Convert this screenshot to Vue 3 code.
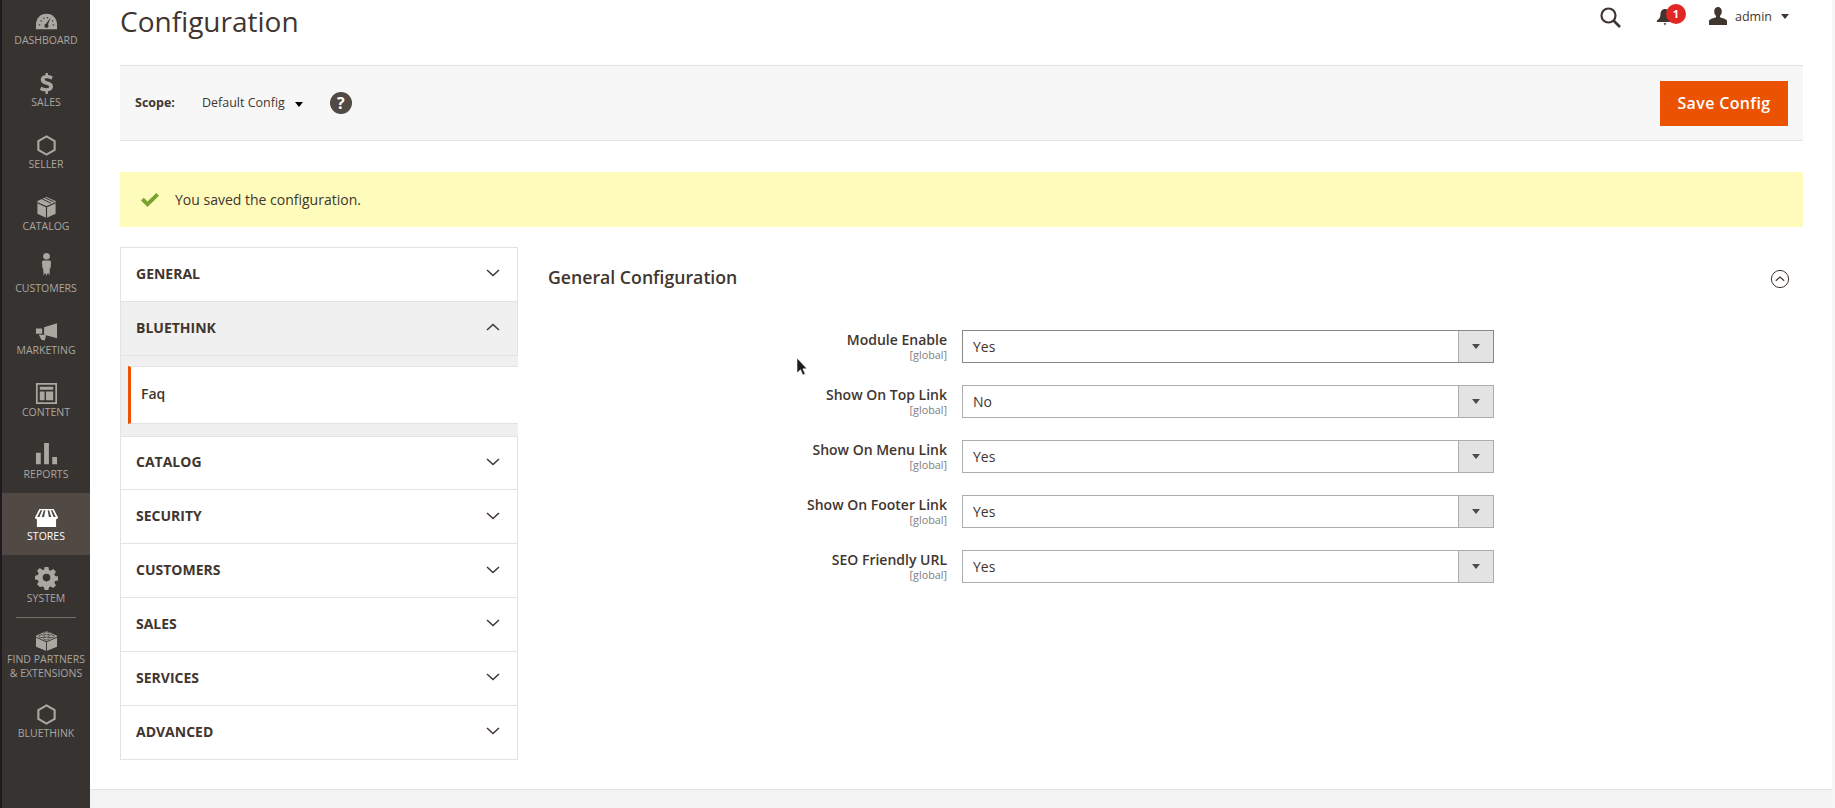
<template>
  <div class="page">
    <aside class="menu">
      <a v-for="item in menu" :key="item.label" class="menu-item" :class="{ active: item.active, partners: item.partners }">
        <svg class="menu-icon" viewBox="0 0 24 24" v-html="item.icon"></svg>
        <span class="menu-label" v-html="item.label"></span>
      </a>
    </aside>

    <div class="main">
      <div class="content">
        <header class="top">
          <h1>Configuration</h1>
          <div class="top-actions">
            <svg class="search" viewBox="0 0 21 21"><circle cx="8.500" cy="8.500" r="7" fill="none" stroke="#41362f" stroke-width="2.200" /><path d="M13.500 13.500L20 20" stroke="#41362f" stroke-width="2.600" /></svg>
            <div class="bell">
              <svg viewBox="0 0 20 20"><path d="M10 1c-3 0-5 2.400-5 5.500 0 3.500-1 5.500-4 7.500v1.500h18V14c-3-2-4-4-4-7.500C15 3.400 13 1 10 1zM8.500 17h3l-1.500 2.500z" fill="#41362f" /></svg>
              <span class="badge">1</span>
            </div>
            <div class="user">
              <svg viewBox="0 0 20 18"><path d="M10 0C7.800 0 6.200 1.800 6.200 4.200c0 2 .7 3.600 1.800 4.600v1.400c-2.500.8-6 1.700-7 3.300V18h18v-4.500c-1-1.600-4.500-2.500-7-3.300V8.800c1.100-1 1.800-2.600 1.800-4.600C13.800 1.800 12.200 0 10 0z" fill="#41362f" /></svg>
              <span>admin</span>
              <i class="caret"></i>
            </div>
          </div>
        </header>

        <div class="actions">
          <div class="scope">
            <b>Scope:</b>
            <span class="scope-value">Default Config</span>
            <i class="caret black"></i>
            <span class="help">?</span>
          </div>
          <button class="save">Save Config</button>
        </div>

        <div class="message">
          <svg viewBox="0 0 20 16"><path d="M1 8.500l2.800-2.700 3.700 3.600L16.300 1 19 3.700 7.500 15z" fill="#79a22e" /></svg>
          <span>You saved the configuration.</span>
        </div>

        <div class="columns">
          <nav class="tabs">
            <template v-for="tab in tabs" :key="tab.name">
              <div class="tab" :class="{ open: tab.open }">
                <span>{{ tab.name }}</span>
                <svg viewBox="0 0 14 8"><path :d="tab.open ? 'M1 7l6-5.500L13 7' : 'M1 1l6 5.500L13 1'" fill="none" stroke="#41362f" stroke-width="1.500" /></svg>
              </div>
              <div v-if="tab.open" class="sub">
                <div class="sub-item">Faq</div>
              </div>
            </template>
          </nav>

          <section class="form">
            <div class="section-head">
              <h2>General Configuration</h2>
              <svg viewBox="0 0 20 20"><circle cx="10" cy="10" r="8.600" fill="none" stroke="#41362f" stroke-width="1" /><path d="M5.800 11.800L10 8l4.200 3.800" fill="none" stroke="#41362f" stroke-width="1.200" /></svg>
            </div>
            <div class="rows">
              <div v-for="(row, i) in rows" :key="row.label" class="row">
                <div class="row-label">
                  <label>{{ row.label }}</label>
                  <small>[global]</small>
                </div>
                <div class="select" :class="{ focused: i === 0 }">
                  <span>{{ row.value }}</span>
                  <div class="addon"><i></i></div>
                </div>
              </div>
            </div>
          </section>
        </div>
      </div>
      <div class="footer"></div>
      <div class="scrollbar"></div>
    </div>

    <svg class="cursor" viewBox="0 0 12 20"><path d="M1 1v15l3.500-3.300 2.300 5.300 2.400-1-2.300-5.200H11z" fill="#1c1c1c" stroke="#fff" stroke-width=".6" /></svg>
  </div>
</template>

<script setup>
const hexagon = '<path d="M12 2.500l8.500 4.800v9.400L12 21.500l-8.500-4.800V7.300z" fill="none" stroke="currentColor" stroke-width="2.200"/>'
const dark = '#373330'

const menu = [
  { label: 'Dashboard', icon: `<path d="M12 4C5.500 4 1 9 1 15.500V20h22v-4.500C23 9 18.500 4 12 4z"/><path d="M4 15.500h1.500M5.800 11l1.200.8M9 7.800l.6 1.300M13 7.200v1.500M19 11l-1.200.8M20 15.500h-1.500" stroke="${dark}" stroke-width="1.200"/><path d="M16.500 7.500l-3.400 8.800-2.400-1z" fill="${dark}"/><circle cx="12" cy="16.500" r="2.200" fill="${dark}"/>` },
  { label: 'Sales', icon: '<path d="M11 1h2.500v2.200c2 .2 3.800.8 5 1.600l-1.300 3.300c-1.500-.9-3.300-1.500-5-1.500-1.500 0-2.200.5-2.200 1.300 0 .9 1 1.300 3.300 2 3.300.9 5.500 2.200 5.500 5.300 0 2.700-1.900 4.600-5.300 5V23H11v-2.700c-2.300-.2-4.500-.9-5.800-1.900l1.400-3.300c1.500 1 3.600 1.800 5.600 1.800 1.600 0 2.500-.5 2.500-1.500 0-.9-.9-1.400-3.100-2-3.400-1-5.600-2.200-5.600-5.200 0-2.700 1.900-4.500 5.100-5z"/>' },
  { label: 'Seller', icon: hexagon },
  { label: 'Catalog', icon: `<path d="M12 1l9.500 4.200v13.300L12 23l-9.500-4.500V5.200z"/><path d="M2.500 7L12 11.300 21.500 7M12 11.300V23" fill="none" stroke="${dark}" stroke-width="1.200"/><path d="M7.500 3.200l9 4.200M10.500 2l9 4" stroke="${dark}" stroke-width="1"/>` },
  { label: 'Customers', icon: '<g transform="translate(-.6 -6) scale(1.05)"><circle cx="12" cy="4" r="3.300"/><path d="M8.500 8.200h7l1 1.300-.4 6-.8.800-.4 7-1.400-3-1.500 3-1.500-3-1.400 3-.4-7-.8-.8-.4-6z"/></g>' },
  { label: 'Marketing', icon: '<path d="M23 3.500v15.500L9.500 15.500v-8zM1 8.800h6.500v5.500H1zM4 15.300h4.500l3 1-1.300 5.200-3.500-1z"/>' },
  { label: 'Content', icon: '<path fill-rule="evenodd" d="M1 1h22v22H1zm1.800 1.800v18.400h18.400V2.800z"/><path d="M5 5h14v3H5zM5 10h5v9H5zM11.500 10H19v9h-7.500z"/>' },
  { label: 'Reports', icon: '<path transform="translate(0 -2)" d="M1 11h5v12H1zM9.500 1h5v22h-5zM18 15.500h5V23h-5z"/>' },
  { label: 'Stores', active: true, icon: '<path fill-rule="evenodd" d="M4.500 3h15L24 12c0 1.200-1 1.800-2 1.800V22H2v-8.200c-1 0-2-.6-2-1.800zM5.800 4.500L2.300 11.500h2.300L7.500 4.500zM9.300 4.500L7 11.500h2.500l1.300-7zM13.200 4.500l1.300 7H17l-2.300-7zM16.500 4.500l2.900 7h2.300l-3.500-7z"/>' },
  { label: 'System', icon: '<path transform="translate(0 -2)" fill-rule="evenodd" d="M10 1h4l.6 3 1.800.8 2.600-1.700 2.900 2.900-1.700 2.600.8 1.800 3 .6v4l-3 .6-.8 1.800 1.700 2.600-2.900 2.900-2.600-1.700-1.800.8-.6 3h-4l-.6-3-1.800-.8L5 21.900 2.100 19l1.700-2.600-.8-1.800-3-.6v-4l3-.6.8-1.800L2.100 5 5 2.100l2.600 1.700L9.400 4zM12 8a4 4 0 1 0 0 8 4 4 0 0 0 0-8z"/>' },
  { label: 'Find Partners<br>&amp; Extensions', partners: true, icon: `<path d="M12 2l11 5v11.500L12 23 1 18.500V7z"/><path d="M1 8.500l11 5 11-5M12 13.500V23" fill="none" stroke="${dark}" stroke-width="1"/><ellipse cx="12" cy="4.500" rx="3" ry="1.500" fill="none" stroke="${dark}" stroke-width=".8"/><ellipse cx="7" cy="7.500" rx="3" ry="1.500" fill="none" stroke="${dark}" stroke-width=".8"/><ellipse cx="17" cy="7.500" rx="3" ry="1.500" fill="none" stroke="${dark}" stroke-width=".8"/><ellipse cx="12" cy="10" rx="3" ry="1.500" fill="none" stroke="${dark}" stroke-width=".8"/>` },
  { label: 'Bluethink', icon: hexagon }
]

const tabs = [
  { name: 'GENERAL' },
  { name: 'BLUETHINK', open: true },
  { name: 'CATALOG' },
  { name: 'SECURITY' },
  { name: 'CUSTOMERS' },
  { name: 'SALES' },
  { name: 'SERVICES' },
  { name: 'ADVANCED' }
]

const rows = [
  { label: 'Module Enable', value: 'Yes' },
  { label: 'Show On Top Link', value: 'No' },
  { label: 'Show On Menu Link', value: 'Yes' },
  { label: 'Show On Footer Link', value: 'Yes' },
  { label: 'SEO Friendly URL', value: 'Yes' }
]
</script>

<style>
html, body {
  margin: 0;
  height: 100%;
  overflow: hidden;
  background: #fff;
}
</style>

<style scoped>
.page {
  display: flex;
  height: 808px;
  font-family: "Open Sans", sans-serif;
  color: #41362f;
  overflow: hidden;
}

.menu {
  width: 88px;
  flex: none;
  background: #373330;
  border-left: 2px solid #1f1a1f;
}

.menu-item {
  display: flex;
  flex-direction: column;
  align-items: center;
  height: 62px;
  color: #aaa6a0;
  box-sizing: border-box;
  padding-top: 13px;
}

.menu-item:first-child {
  margin-top: -3px;
}

.menu-item.active {
  background: #514943;
  color: #fff;
}

.menu-item.partners {
  height: 73px;
  border-top: 1px solid #736d68;
  margin: 0 14px;
  padding-top: 11px;
}

.menu-icon {
  width: 23px;
  height: 23px;
  flex: none;
  fill: currentColor;
  overflow: visible;
}

.menu-label {
  font-size: 10.500px;
  line-height: 14px;
  text-transform: uppercase;
  text-align: center;
  white-space: nowrap;
}

.main {
  flex: 1;
  display: flex;
  flex-direction: column;
  position: relative;
}

.content {
  flex: 1;
  padding: 0 32px 0 30px;
}

.top {
  display: flex;
  justify-content: space-between;
  height: 65px;
}

h1 {
  margin: 0;
  font-size: 28px;
  font-weight: 400;
  line-height: 42px;
}

.top-actions {
  display: flex;
  align-items: flex-start;
  padding: 7px 14px 0 0;
}

.search {
  width: 21px;
  height: 21px;
  margin-right: 35px;
}

.bell {
  position: relative;
  width: 30px;
  height: 18px;
  margin-right: 22px;
  margin-top: 1px;
}

.bell svg {
  display: block;
  width: 18px;
  height: 18px;
}

.badge {
  position: absolute;
  top: -4px;
  left: 10px;
  width: 20px;
  height: 20px;
  border-radius: 50%;
  background: #e22626;
  color: #fff;
  font-size: 11px;
  font-weight: 700;
  line-height: 20px;
  text-align: center;
}

.user {
  display: flex;
  align-items: center;
  font-size: 12.500px;
  height: 18px;
}

.user svg {
  width: 20px;
  height: 18px;
  margin-right: 7px;
}

.caret {
  width: 0;
  height: 0;
  border: 4px solid transparent;
  border-top: 5px solid #41362f;
  border-bottom: 0;
  margin-left: 9px;
}

.caret.black {
  border-top-color: #000;
  margin-left: 10px;
  margin-top: 3px;
}

.actions {
  display: flex;
  justify-content: space-between;
  align-items: center;
  height: 76px;
  box-sizing: border-box;
  background: #f7f7f7;
  border-top: 1px solid #e3e3e3;
  border-bottom: 1px solid #e3e3e3;
  padding: 0 15px;
}

.scope {
  display: flex;
  align-items: center;
  font-size: 12.500px;
  margin-top: -1px;
}

.scope-value {
  margin-left: 27px;
}

.help {
  width: 22px;
  height: 22px;
  margin-left: 27px;
  border-radius: 50%;
  background: #514943;
  color: #fff;
  font-size: 16px;
  font-weight: 700;
  line-height: 22px;
  text-align: center;
}

.save {
  width: 128px;
  height: 45px;
  border: 0;
  background: #eb5202;
  color: #fff;
  font-family: inherit;
  font-size: 16px;
  font-weight: 600;
  letter-spacing: .35px;
  padding: 0;
}

.message {
  display: flex;
  align-items: center;
  height: 55px;
  margin-top: 31px;
  background: #fffbbb;
  font-size: 14px;
  padding-left: 20px;
}

.message svg {
  width: 20px;
  height: 16px;
  margin-right: 15px;
}

.columns {
  display: flex;
  margin-top: 20px;
}

.tabs {
  width: 398px;
  flex: none;
  box-sizing: border-box;
  border: 1px solid #e3e3e3;
  height: 513px;
}

.tab {
  display: flex;
  justify-content: space-between;
  align-items: center;
  height: 53.800px;
  box-sizing: border-box;
  padding: 0 17px 2px 15px;
  border-bottom: 1px solid #e3e3e3;
  font-size: 14px;
  font-weight: 700;
}

.tab:last-child {
  border-bottom: 0;
}

.tab.open {
  background: #f0f0f0;
}

.tab svg {
  width: 14px;
  height: 8px;
}

.sub {
  background: #f0f0f0;
  padding: 10px 0 12px 7px;
  margin-right: -1px;
  border-bottom: 1px solid #e3e3e3;
}

.sub-item {
  height: 58px;
  box-sizing: border-box;
  background: #fff;
  border-left: 3px solid #eb5202;
  border-top: 1px solid #e3e3e3;
  border-bottom: 1px solid #e3e3e3;
  padding-left: 10px;
  font-size: 14px;
  font-weight: 600;
  line-height: 54px;
}

.form {
  flex: 1;
  padding-left: 30px;
}

.section-head {
  display: flex;
  justify-content: space-between;
  align-items: center;
  height: 62px;
  padding-right: 13px;
}

h2 {
  margin: 0 0 2px;
  font-size: 17.700px;
  font-weight: 600;
}

.section-head svg {
  width: 20px;
  height: 20px;
  margin-top: 1px;
}

.rows {
  margin-top: 21px;
  display: flex;
  flex-direction: column;
  gap: 22px;
}

.row {
  display: flex;
  height: 33px;
}

.row-label {
  width: 399px;
  text-align: right;
  display: flex;
  flex-direction: column;
}

.row-label label {
  font-size: 14px;
  font-weight: 600;
  line-height: 19px;
}

.row-label small {
  font-size: 10.800px;
  line-height: 12px;
  color: #808080;
}

.select {
  display: flex;
  justify-content: space-between;
  width: 532px;
  margin-left: 15px;
  box-sizing: border-box;
  border: 1px solid #adadad;
  font-size: 14px;
  line-height: 31px;
  padding-left: 10px;
}

.select.focused {
  border-color: #888;
}

.addon {
  width: 34px;
  background: #e3e3e3;
  border-left: 1px solid #adadad;
  display: flex;
  align-items: center;
  justify-content: center;
}

.addon i {
  width: 0;
  height: 0;
  border: 4px solid transparent;
  border-top: 5px solid #514943;
  border-bottom: 0;
}

.footer {
  height: 18px;
  flex: none;
  background: #f3f3f3;
  border-top: 1px solid #e3e3e3;
}

.scrollbar {
  position: absolute;
  top: 0;
  right: 0;
  bottom: 0;
  width: 3px;
  background: #f7f7f7;
}

.cursor {
  position: absolute;
  left: 796px;
  top: 357px;
  width: 12px;
  height: 20px;
}
</style>
